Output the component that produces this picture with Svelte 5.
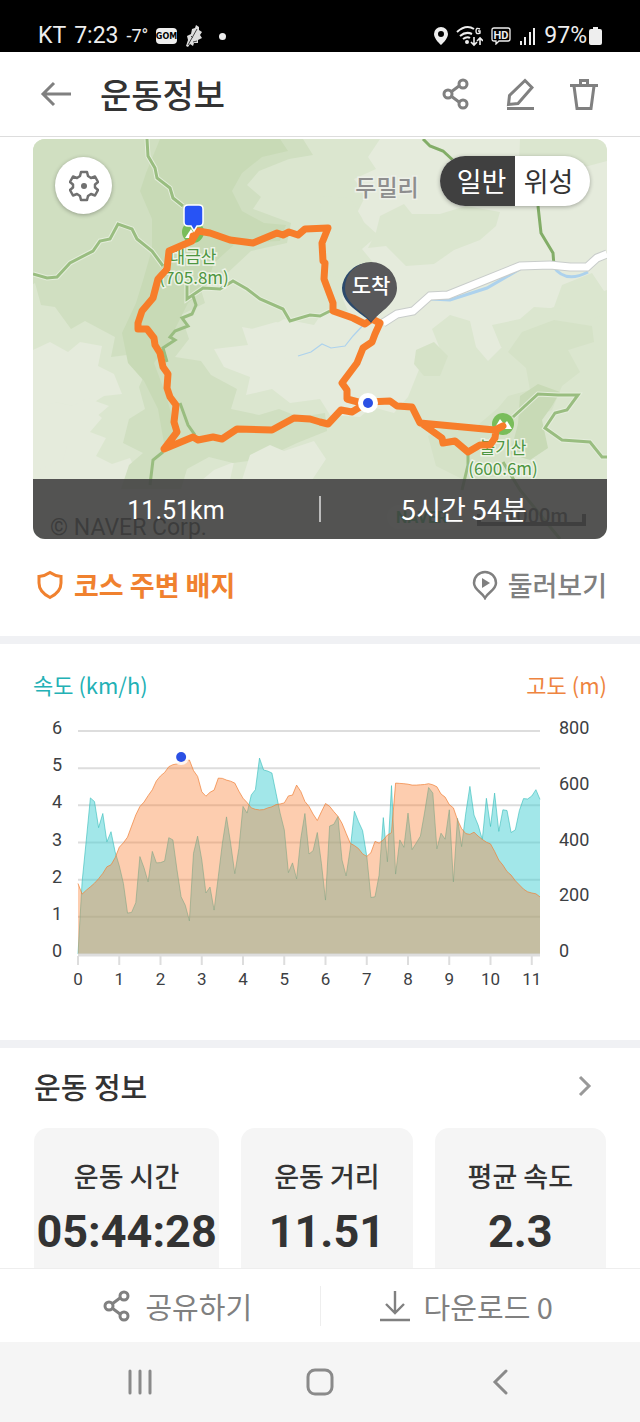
<script>
    const speed = [
        0, 1.94, 3.07, 4.2, 4.1, 3.4, 3.78, 3.02, 3.29, 2.75,
        2.37, 1.9, 1.1, 1.12, 1.38, 2.62, 2.32, 1.94, 2.76, 2.45,
        2.46, 2.5, 3.13, 3.07, 2.26, 1.54, 1.31, 0.89, 2.71, 3.17,
        2.53, 1.64, 1.8, 1.18, 2.08, 2.98, 3.69, 2.98, 2.16, 2.84,
        3.97, 3.79, 4.28, 4.42, 5.27, 4.95, 4.92, 4.87, 4.33, 3.79,
        3.34, 2.19, 2.45, 2.02, 3.11, 3.78, 2.69, 2.78, 3.27, 2.44,
        1.45, 3.44, 3.49, 3.7, 2.53, 2.1, 2.84, 3.84, 3.56, 3.32,
        2.62, 1.52, 1.54, 2.12, 3.67, 2.48, 4.53, 2.15, 3.07, 2.87,
        3.79, 2.81, 2.99, 3.17, 3.79, 4.48, 4.33, 2.83, 3.25, 3.09,
        3.88, 1.94, 3.65, 2.89, 3.79, 4.51, 3.74, 3.47, 3.08, 4.19,
        3.43, 4.33, 3.3, 3.88, 3.86, 3.27, 3.34, 3.86, 4.18, 4.17,
        4.25, 4.42, 4.16
    ]
    const altitude = [
        253, 215, 229, 241, 254, 270, 289, 313, 320, 345,
        383, 399, 419, 459, 499, 529, 545, 568, 589, 621,
        639, 651, 672, 679, 682, 690, 694, 696, 658, 637,
        582, 566, 580, 588, 631, 630, 624, 620, 613, 584,
        559, 543, 524, 519, 517, 518, 524, 528, 536, 538,
        542, 567, 570, 606, 583, 547, 529, 502, 479, 510,
        540, 530, 511, 494, 469, 433, 397, 389, 378, 359,
        350, 363, 404, 398, 409, 427, 435, 613, 612, 611,
        609, 606, 606, 607, 608, 611, 607, 600, 574, 563,
        536, 524, 481, 450, 432, 429, 437, 423, 411, 401,
        395, 368, 337, 319, 296, 283, 263, 248, 233, 223,
        219, 216, 205
    ]

    // plot area inside the 574 x 290 chart
    const left = 45
    const right = 507
    const top = 21
    const bottom = 244
    const maxKm = 11.2

    const px = (km) => left + (km / maxKm) * (right - left)
    const py = (value, max) => bottom - (value / max) * (bottom - top)
    const line = (data, max) => data.map((v, i) => `${px(i / 10).toFixed(1)},${py(v, max).toFixed(1)}`).join(" ")
    const area = (data, max) => `${left},${bottom} ${line(data, max)} ${right},${bottom}`

    const speedTicks = [0, 1, 2, 3, 4, 5, 6]
    const altitudeTicks = [0, 200, 400, 600, 800]
    const kmTicks = [0, 1, 2, 3, 4, 5, 6, 7, 8, 9, 10, 11]

    const stats = [
        { label: "운동 시간", value: "05:44:28" },
        { label: "운동 거리", value: "11.51" },
        { label: "평균 속도", value: "2.3" }
    ]

    let mapType = "normal"
</script>

{#snippet shareIcon()}
    <svg width="28" height="32" viewBox="0 0 28 32" fill="none" stroke="currentColor" stroke-width="3" aria-hidden="true">
        <path d="M9 14 17 8M9 18l8 6" />
        <circle cx="6" cy="16" r="4" />
        <circle cx="21" cy="6" r="4" />
        <circle cx="21" cy="26" r="4" />
    </svg>
{/snippet}

<div class="status">
    <div class="status-side">
        <span>KT</span>
        <span>7:23</span>
        <span class="temp">-7°</span>
        <svg width="21" height="16" viewBox="0 0 21 16" aria-hidden="true">
            <rect width="21" height="16" rx="4" fill="#eee" />
            <text x="10.5" y="11" text-anchor="middle" class="gom">GOM</text>
        </svg>
        <svg width="18" height="22" viewBox="0 0 18 22" aria-hidden="true">
            <path d="M1 21 3 15 2 11 6 9 7 4 10 3 11 0 14 2 14 5 17 7 15 10 17 13 13 15 13 18 9 18 8 21 5 19 3 22z" fill="#ddd" />
            <path d="M3 20 12 4M6 11l2 2M8 17l4-1" stroke="#444" fill="none" />
        </svg>
        <i class="more"></i>
    </div>
    <div class="status-side">
        <svg width="14" height="18" viewBox="0 0 14 18" aria-hidden="true">
            <path d="M7 0a7 7 0 0 0-7 7c0 5 7 11 7 11s7-6 7-11a7 7 0 0 0-7-7zm0 4a3 3 0 1 1 0 6 3 3 0 0 1 0-6z" fill="#eee" fill-rule="evenodd" />
        </svg>
        <svg width="27" height="21" viewBox="0 0 27 21" fill="none" stroke="#eee" stroke-width="2" aria-hidden="true">
            <path d="M1 6Q10-2 18 3M4 10q6-5 12-2M7 13q4-3 7-1" />
            <circle cx="11" cy="16" r="1" />
            <path d="M18 11v8m-3-3 3 3 3-3M24 19v-7m-3 3 3-3 3 3" stroke-width="1.6" />
            <path d="M24 3q-4-2-4 2t4 2V5h-2" stroke-width="1.4" />
        </svg>
        <svg width="20" height="18" viewBox="0 0 20 18" aria-hidden="true">
            <path d="M3 1h14q2 0 2 2v9q0 2-2 2H8l-3 3v-3H3q-2 0-2-2V3q0-2 2-2z" fill="none" stroke="#eee" stroke-width="1.3" />
            <text x="10" y="12" text-anchor="middle" class="hd">HD</text>
        </svg>
        <svg width="17" height="18" viewBox="0 0 17 18" aria-hidden="true">
            <path d="M1 14h2v4H1zM5 10h2v8H5zM10 5h2v13h-2zM14 1h2v17h-2z" fill="#eee" />
        </svg>
        <span class="percent">97%</span>
        <svg width="13" height="18" viewBox="0 0 13 18" aria-hidden="true">
            <path d="M4 0h5v2h2q2 0 2 2v12q0 2-2 2H2q-2 0-2-2V4q0-2 2-2h2z" fill="#eee" />
        </svg>
    </div>
</div>

<header>
    <button class="icon" aria-label="뒤로">
        <svg width="32" height="26" viewBox="0 0 32 26" fill="none" stroke="currentColor" stroke-width="3" aria-hidden="true">
            <path d="M31 13H3M14 2 3 13l11 11" />
        </svg>
    </button>
    <h1>운동정보</h1>
    <button class="icon" aria-label="공유">{@render shareIcon()}</button>
    <button class="icon" aria-label="편집">
        <svg width="28" height="32" viewBox="0 0 28 32" fill="none" stroke="currentColor" stroke-width="3" aria-hidden="true">
            <path d="M19 2.500 26 9.500 12 25.500 2.500 26.500 3.500 17.500zM1 30.500h27" />
        </svg>
    </button>
    <button class="icon" aria-label="삭제">
        <svg width="28" height="32" viewBox="0 0 28 32" fill="none" stroke="currentColor" stroke-width="3" aria-hidden="true">
            <path d="M0 7.500h28M10.500 7V2.500h7V7M4 8l3 22.500h14L24 8" />
        </svg>
    </button>
</header>

<main>
    <section class="map">
        <svg class="canvas" viewBox="33 139 574 400" role="img" aria-label="코스 지도">
            <rect x="33" y="139" width="574" height="400" fill="#e5ebdc" />
            <g fill="#dbe6cf">
                <path d="M33 139H380l-12 18 8 12-22 10 12 16-10 20 22 20-16 14 18 22-8 16-30 10 6 14-26 2-8 12-30-6-20 12-22-4 6 18-34 4 10 18 26 10-4 18 26-6 18 14 30-4 10 16 30 2 12-10 22 6 14-16 12-30 20-18-8-20 18-14 20 6 6 26 12 14 22-22 14 10 16-16-4-20 18-6 8-22 30-12 12 18 20-6 12 14 18 2V480H230l4-18-20 8-12 10H140l-10-22-18 6-16-8 10-18-16-6 12-14-14-12 16-10 18-2-8-20-16-8 4-20-22-4-12 10-18-10-17 8z" />
                <path d="M380 216l24-12 8 10 28 0 26-8 34 6-4 14-16 14-26 10-20 14-28 2-20-20-18 2 8-16z" />
                <path d="M520 139h87v22l-30 8-12 16-16-8-20 4-10-16z" />
                <path d="M492 325l28-6 14-12 30 2 24 12 19-8v26h-24l-20 10-16-10-24 12-22-4z" />
                <path d="M320 196l30 2 12 20 10 22-16 12 6 16-20 10-20-4z" />
            </g>
            <g fill="#d0dfc1">
                <path d="M33 139h270l10 16-24 4-30 12-12 14 14 12-8 12 38 14-4 20-36 8-30 28-22 4 6 20-24 12 8 24-14 18 26 4 10 14 26 14-6 20 28 6 20-6 20 8 26-4 2 18-30 12-34 16-30 4-24-6-22 12-6 20h-60l8-24 14-12-20-10 6-24 16-10-6-22 8-18-20-14-16 2 4-20-30-16-14 8-16-22-14-2-6-22-16 10z" />
                <path d="M508 352l14-20 32-12 38 6 2 16-26 8 12 22-18 14-10 24-30 12-4 28-14 26-40 4-28-14-8-30 24-12 20 6 26-22 10-12 22-6-4-22z" fill="#d5e2c7" />
                <path d="M416 350l18-8 14 14-8 20-16 0-10-12z" fill="#d5e2c7" />
            </g>
            <g fill="#c8dab6">
                <path d="M160 139h120l8 12-26 6-20 16-10 18 10 20 22 12 22 2-6 16-44 2-22 20-8 24-18 16-20 40-14 20 12 32 10 36-12 12-6-34-14-28-16-18-6-30 14-30 8-26 8-28 0-30-12-28 6-18z" />
                <path d="M520 396l18-12 22 8-8 14-10 14 6 28-18 12-20-6 8-30z" />
            </g>
            <g fill="#e5ebdc">
                <path d="M33 412l22-10 18 4 14-8 22 8-14 12-8 22-20 6-4 14-30 12z" />
                <path d="M248 330l28-8 24 6 20 14 0 26-20-2-18-10-22 4-12-14z" />
                <path d="M250 455l20-10 14 6 30-10 12 18-14 21h-70z" />
            </g>

            <g fill="none" stroke="#add2ed" stroke-width="3">
                <path d="M430 299l20 1 37-12 33-19M553 266q12 18 35 6" />
                <path d="M298 356l13-4 11-8 9 4 14-2 8-10 14-15" stroke-width="1.200" />
            </g>
            <g fill="none" stroke="#e4eddb" stroke-width="5">
                <path d="M147 139 148 156 155 168 157 178 170 188 173 198 183 206" />
                <path d="M33 274 47 278 57 277 70 263 93 251 100 241 110 239 118 224 132 229 137 239 152 251 163 266" />
                <path d="M187 283V299L203 288 220 289 233 281 247 289 260 299 283 309 290 321 310 315 320 316 330 311" />
                <path d="M513 417 538 394 558 395 578 395 567 410 555 413 545 428 562 440 590 442 602 457H607" />
            </g>
            <g fill="none" stroke="#99bd80" stroke-width="3">
                <path d="M147 139 148 156 155 168 157 178 170 188 173 198 183 206" />
                <path d="M33 274 47 278 57 277 70 263 93 251 100 241 110 239 118 224 132 229 137 239 152 251 163 266" />
                <path d="M187 283V299L203 288 220 289 233 281 247 289 260 299 283 309 290 321 310 315 320 316 330 311" />
                <path d="M193 296 196 305 192 314 182 318 188 326 175 331 170 337 175 340 163 348 167 362" />
                <path d="M180 403 188 425 195 435M163 452 153 460 150 485" />
                <path d="M513 417 538 394 558 395 578 395 567 410 555 413 545 428 562 440 590 442 602 457H607" />
                <path d="M468 455V465L462 490M503 462 520 490 560 539" />
                <path d="M423 139 430 146 443 151 456 163M538 206 541 233 553 253 554 266" stroke="#82ad67" />
            </g>
            <path class="road-edge" d="M383 323 397 314 413 311 430 296 448 295 520 266 550 265 570 267 587 267 597 258 607 254" />
            <path class="road" d="M383 323 397 314 413 311 430 296 448 295 520 266 550 265 570 267 587 267 597 258 607 254" />

            <circle cx="193" cy="232" r="11" fill="#79bd5a" />
            <path d="M185 238l6-9 6 9z" fill="#fff" />
            <circle cx="503" cy="424" r="11" fill="#79bd5a" />
            <path d="M494 429l6-10 4 5 3-3 5 8z" fill="#fff" />
            <g class="peak">
                <text x="193" y="263">대금산</text>
                <text x="194" y="284">(705.8m)</text>
                <text x="503" y="454">불기산</text>
                <text x="503" y="475">(600.6m)</text>
            </g>
            <text class="village" x="387" y="196">두밀리</text>

            <g class="route">
                <path d="M193 239 198 231 210 233 230 240 253 243 277 233 283 235 289 232 298 235 305 229 328 228 322 243 323 261 325 263 324 279 333 303 333 311 353 318 365 324 372 319 380 323 375 334 372 342 363 348 357 363 342 383 347 390 347 399 358 402 368 402 390 401 397 406 412 407 420 423 495 430 503 426 496 430 495 438 490 445 480 445 468 452 455 441 443 443 442 438 421 423" />
                <path d="M368 402 352 412 341 410 328 424 320 422 310 419 294 418 272 430 237 429 222 439 213 437 198 440 193 437 164 449 177 432 174 422 176 405 170 397 167 388 168 374 163 367 160 353 155 345 154 338 147 329 138 329 138 323 142 311 153 298 158 279 167 269 169 251 192 241 193 236" />
            </g>
            <path d="M188 205h11q4 0 4 4v13q0 4-4 4h-2l-3 5-3-5h-3q-4 0-4-4v-13q0-4 4-4z" fill="#2753f5" stroke="#fff" stroke-width="1.500" />
            <path d="M371 323c-5-8-29-17-29-35a27 27 0 0 1 52-8c8 20-14 30-23 43z" fill="#2c4a6c" />
            <path d="M371 322c-4-8-26-17-26-34a26 26 0 0 1 52 0c0 17-21 26-26 34z" fill="#58585a" />
            <text class="finish" x="371" y="293">도착</text>
            <circle cx="368" cy="403" r="10" fill="#fff" />
            <circle cx="368" cy="403" r="5" fill="#2b50e4" />
            <text class="credit" x="50" y="535">© NAVER Corp.</text>
            <g class="naver">
                <rect x="387" y="505" width="73" height="24" rx="12" />
                <text x="396" y="523">NAVER</text>
            </g>
            <text class="scale" x="505" y="523">1000m</text>
            <path d="M479 514v10h105v-10" fill="none" stroke="#222" stroke-width="4" />
        </svg>

        <button class="gear" aria-label="설정">
            <svg width="30" height="32" viewBox="0 0 30 32" aria-hidden="true">
                <path d="M12 2h6l1 4 3 2 4-1.500 3 5.500-3 2.500v3l3 2.500-3 5.500-4-1.500-3 2-1 4h-6l-1-4-3-2-4 1.500-3-5.500 3-2.500v-3l-3-2.500 3-5.500 4 1.500 3-2z" fill="none" stroke="currentColor" stroke-width="2.500" stroke-linejoin="round" />
                <circle cx="15" cy="16" r="3" fill="currentColor" />
            </svg>
        </button>
        <div class="toggle">
            <button class:active={mapType === "normal"} on:click={() => mapType = "normal"}>일반</button>
            <button class:active={mapType === "satellite"} on:click={() => mapType = "satellite"}>위성</button>
        </div>
        <div class="summary">
            <span class="distance">11.51km</span>
            <i></i>
            <span>5시간 54분</span>
        </div>
    </section>

    <div class="links">
        <a class="badge" href="#badge">
            <svg width="28" height="30" viewBox="0 0 28 30" fill="none" stroke="currentColor" stroke-width="3" aria-hidden="true">
                <path d="M14 2.500Q19 6 25 6.500V13q0 9-11 14.500Q3 22 3 13V6.500Q9 6 14 2.500z" />
            </svg>
            코스 주변 배지
        </a>
        <a class="tour" href="#tour">
            <svg width="26" height="30" viewBox="0 0 26 30" aria-hidden="true">
                <path d="M13 2a11 11 0 0 0-11 11c0 7 8 9 11 15 3-6 11-8 11-15A11 11 0 0 0 13 2z" fill="none" stroke="currentColor" stroke-width="2.500" />
                <path d="M10 8v10l8-5z" fill="currentColor" />
            </svg>
            둘러보기
        </a>
    </div>
</main>

<section class="graph">
    <div class="legend">
        <span class="speed">속도 (km/h)</span>
        <span class="altitude">고도 (m)</span>
    </div>
    <svg viewBox="0 0 574 290" role="img" aria-label="속도와 고도 그래프">
        {#each speedTicks as tick}
            <line class="grid" x1={left} x2={right} y1={py(tick, 6)} y2={py(tick, 6)} />
            <text class="tick" x="29" y={py(tick, 6) + 3} text-anchor="end">{tick}</text>
        {/each}
        <polygon points={area(speed, 6)} fill="#45d0d3" fill-opacity="0.5" />
        <polyline points={line(speed, 6)} fill="none" stroke="#35bcb9" stroke-opacity="0.6" />
        <polygon points={area(altitude, 800)} fill="#fa8237" fill-opacity="0.4" />
        <polyline points={line(altitude, 800)} fill="none" stroke="#f08038" stroke-opacity="0.7" />
        <line class="base" x1={left} x2={right} y1={bottom + 1} y2={bottom + 1} />
        {#each altitudeTicks as tick}
            <text class="tick" x="526" y={py(tick, 800) + 3}>{tick}</text>
        {/each}
        {#each kmTicks as km}
            <line class="grid" x1={px(km)} x2={px(km)} y1={bottom + 2} y2={bottom + 11} />
            <text class="tick km" x={px(km)} y="275" text-anchor="middle">{km}</text>
        {/each}
        <circle cx={px(2.5)} cy="47" r="8" fill="#fff" fill-opacity="0.8" />
        <circle cx={px(2.5)} cy="47" r="5" fill="#2b50e4" />
    </svg>
</section>

<section class="info">
    <div class="info-head">
        <h2>운동 정보</h2>
        <button aria-label="운동 정보 더보기">
            <svg width="14" height="22" viewBox="0 0 14 22" fill="none" stroke="#999" stroke-width="3" aria-hidden="true">
                <path d="M2 2l9 9-9 9" />
            </svg>
        </button>
    </div>
    <div class="cards">
        {#each stats as stat}
            <div class="card">
                <p>{stat.label}</p>
                <strong>{stat.value}</strong>
            </div>
        {/each}
    </div>
</section>

<footer>
    <button>{@render shareIcon()}공유하기</button>
    <i></i>
    <button>
        <svg width="30" height="32" viewBox="0 0 30 32" fill="none" stroke="currentColor" stroke-width="2.400" aria-hidden="true">
            <path d="M15 1v22M6 14l9 9 9-9M0 30h30" />
        </svg>
        다운로드 0
    </button>
</footer>

<nav>
    <button aria-label="최근 앱">
        <svg width="26" height="26" viewBox="0 0 26 26" stroke="#8a8a8a" stroke-width="3" stroke-linecap="round" aria-hidden="true">
            <path d="M3 2v22M13 2v22M23 2v22" />
        </svg>
    </button>
    <button aria-label="홈">
        <svg width="28" height="28" viewBox="0 0 28 28" fill="none" stroke="#8a8a8a" stroke-width="3" aria-hidden="true">
            <rect x="2" y="2" width="24" height="24" rx="7" />
        </svg>
    </button>
    <button aria-label="뒤로 가기">
        <svg width="16" height="26" viewBox="0 0 16 26" fill="none" stroke="#8a8a8a" stroke-width="3" stroke-linecap="round" aria-hidden="true">
            <path d="M14 2 3 13l11 11" />
        </svg>
    </button>
</nav>

<style>
    :global(body) {
      background: #fff;
      color: #333;
      font-family: "Noto Sans CJK KR", "Noto Sans", sans-serif;
    }

    button {
      display: flex;
      align-items: center;
      justify-content: center;
      padding: 0;
      border: 0;
      background: none;
      color: inherit;
      font: inherit;
      cursor: pointer;
    }

    svg {
      flex: none;
    }

    .status {
      display: flex;
      justify-content: space-between;
      height: 52px;
      padding: 20px 38px 0;
      box-sizing: border-box;
      background: #000;
      color: #eee;
      font: 23px/32px Roboto, sans-serif;
    }

    .status-side {
      display: flex;
      align-items: center;
      gap: 8px;
      height: 32px;
    }

    .temp {
      font-size: 18px;
    }

    .gom {
      font: bold 8px "DejaVu Sans", sans-serif;
      fill: #000;
    }

    .hd {
      font: bold 11px Roboto, sans-serif;
      fill: #eee;
    }

    .percent {
      margin-right: -6px;
    }

    .more {
      width: 7px;
      height: 7px;
      margin-left: 8px;
      border-radius: 50%;
      background: #eee;
    }

    header {
      display: flex;
      align-items: center;
      gap: 36px;
      height: 84px;
      padding: 0 42px 0 40px;
      border-bottom: 1px solid #ddd;
      color: #808080;
    }

    h1 {
      flex: 1;
      margin: 0 0 0 -8px;
      color: #333;
      font-size: 34px;
      font-weight: 500;
      line-height: 48px;
    }

    main {
      padding: 2px 33px 0;
      border-bottom: 8px solid #f0f1f4;
    }

    .map {
      position: relative;
      overflow: hidden;
      border-radius: 12px;
    }

    .canvas {
      display: block;
      width: 100%;
    }

    .road-edge {
      fill: none;
      stroke: #c9cdcb;
      stroke-width: 9px;
    }

    .road {
      fill: none;
      stroke: #fff;
      stroke-width: 7px;
    }

    .route {
      fill: none;
      stroke: #f77d2a;
      stroke-width: 7px;
      stroke-linecap: round;
      stroke-linejoin: round;
    }

    .peak {
      fill: #4e9641;
      stroke: #edf3e6;
      stroke-width: 3px;
      paint-order: stroke;
      font-size: 17px;
      text-anchor: middle;
    }

    .village {
      fill: #8e8e8e;
      stroke: #edf0e8;
      stroke-width: 3px;
      paint-order: stroke;
      font-size: 23px;
      font-weight: 500;
      text-anchor: middle;
    }

    .finish {
      fill: #fff;
      font-size: 21px;
      font-weight: 500;
      text-anchor: middle;
    }

    .credit {
      font: 23px Roboto, sans-serif;
    }

    .scale {
      font: 500 20px Roboto, sans-serif;
      fill: #222;
    }

    .naver rect {
      fill: #fff;
      fill-opacity: 0.4;
    }

    .naver text {
      font: bold 16px Roboto, sans-serif;
      fill: #1ca84c;
    }

    .gear {
      position: absolute;
      top: 18px;
      left: 22px;
      width: 57px;
      height: 57px;
      border-radius: 50%;
      background: #fff;
      color: #707070;
      box-shadow: 0 1px 4px rgba(0, 0, 0, 0.3);
    }

    .toggle {
      position: absolute;
      top: 17px;
      right: 17px;
      display: flex;
      overflow: hidden;
      border-radius: 25px;
      background: #fff;
      box-shadow: 0 1px 4px rgba(0, 0, 0, 0.3);
    }

    .toggle button {
      width: 75px;
      height: 50px;
      padding-right: 8px;
      font-size: 27px;
      line-height: 40px;
    }

    .toggle button:first-child {
      padding: 0 0 0 8px;
    }

    .toggle .active {
      background: #404040;
      color: #fff;
    }

    .summary {
      position: absolute;
      right: 0;
      bottom: 0;
      left: 0;
      display: flex;
      align-items: center;
      height: 60px;
      background: rgba(66, 66, 66, 0.9);
      color: #fff;
      font-size: 27px;
      line-height: 40px;
    }

    .summary span {
      flex: 1;
      text-align: center;
    }

    .summary .distance {
      padding-top: 4px;
      font-family: Roboto, sans-serif;
      font-size: 25px;
    }

    .summary i {
      width: 2px;
      height: 26px;
      background: #bbb;
    }

    .links {
      display: flex;
      justify-content: space-between;
      height: 97px;
      align-items: flex-start;
    }

    .links a {
      display: flex;
      align-items: center;
      gap: 10px;
      padding-top: 26px;
      font-size: 27px;
      line-height: 40px;
      text-decoration: none;
    }

    .badge {
      margin-left: 3px;
      color: #f0812f;
      font-weight: 700;
    }

    .tour {
      color: #808080;
      font-weight: 500;
    }

    .graph {
      padding: 24px 33px 40px;
      border-bottom: 8px solid #f0f1f4;
    }

    .graph svg {
      display: block;
      width: 100%;
    }

    .legend {
      display: flex;
      justify-content: space-between;
      margin-bottom: 10px;
      font-size: 22px;
      line-height: 32px;
    }

    .speed {
      color: #23b1b5;
    }

    .altitude {
      color: #ee8440;
    }

    .grid {
      stroke: #ddd;
      stroke-width: 2px;
    }

    .base {
      stroke: #ddd;
      stroke-width: 3px;
    }

    .tick {
      fill: #3c4043;
      font: 18px Roboto, sans-serif;
    }

    .tick.km {
      font-size: 17px;
    }

    .info {
      padding: 16px 34px 0;
    }

    .info-head {
      display: flex;
      align-items: center;
      justify-content: space-between;
      height: 44px;
      margin-bottom: 20px;
    }

    .info-head button {
      width: 42px;
      height: 42px;
    }

    h2 {
      margin: 0;
      font-size: 29px;
      font-weight: 500;
      line-height: 44px;
    }

    .cards {
      display: grid;
      grid-template-columns: 1.08fr 1fr 1fr;
      gap: 22px;
    }

    .card {
      height: 140px;
      padding-top: 28px;
      box-sizing: border-box;
      border-radius: 14px 14px 0 0;
      background: #f5f5f5;
      text-align: center;
    }

    .card p {
      margin: 0;
      font-size: 27px;
      font-weight: 500;
      line-height: 40px;
    }

    .card strong {
      display: block;
      margin-top: 6px;
      font: bold 45px/60px Roboto, sans-serif;
    }

    footer {
      display: flex;
      align-items: center;
      height: 73px;
      border-top: 1px solid #eee;
      color: #808080;
    }

    footer button {
      flex: 1;
      gap: 14px;
      padding-left: 36px;
      font-size: 29px;
      line-height: 44px;
    }

    footer button:last-child {
      padding: 0 32px 0 4px;
    }

    footer i {
      width: 1px;
      height: 40px;
      background: #eee;
    }

    nav {
      display: grid;
      grid-template-columns: 1fr 1fr 1fr;
      height: 80px;
      padding: 0 50px;
      background: #f5f5f5;
    }
</style>
